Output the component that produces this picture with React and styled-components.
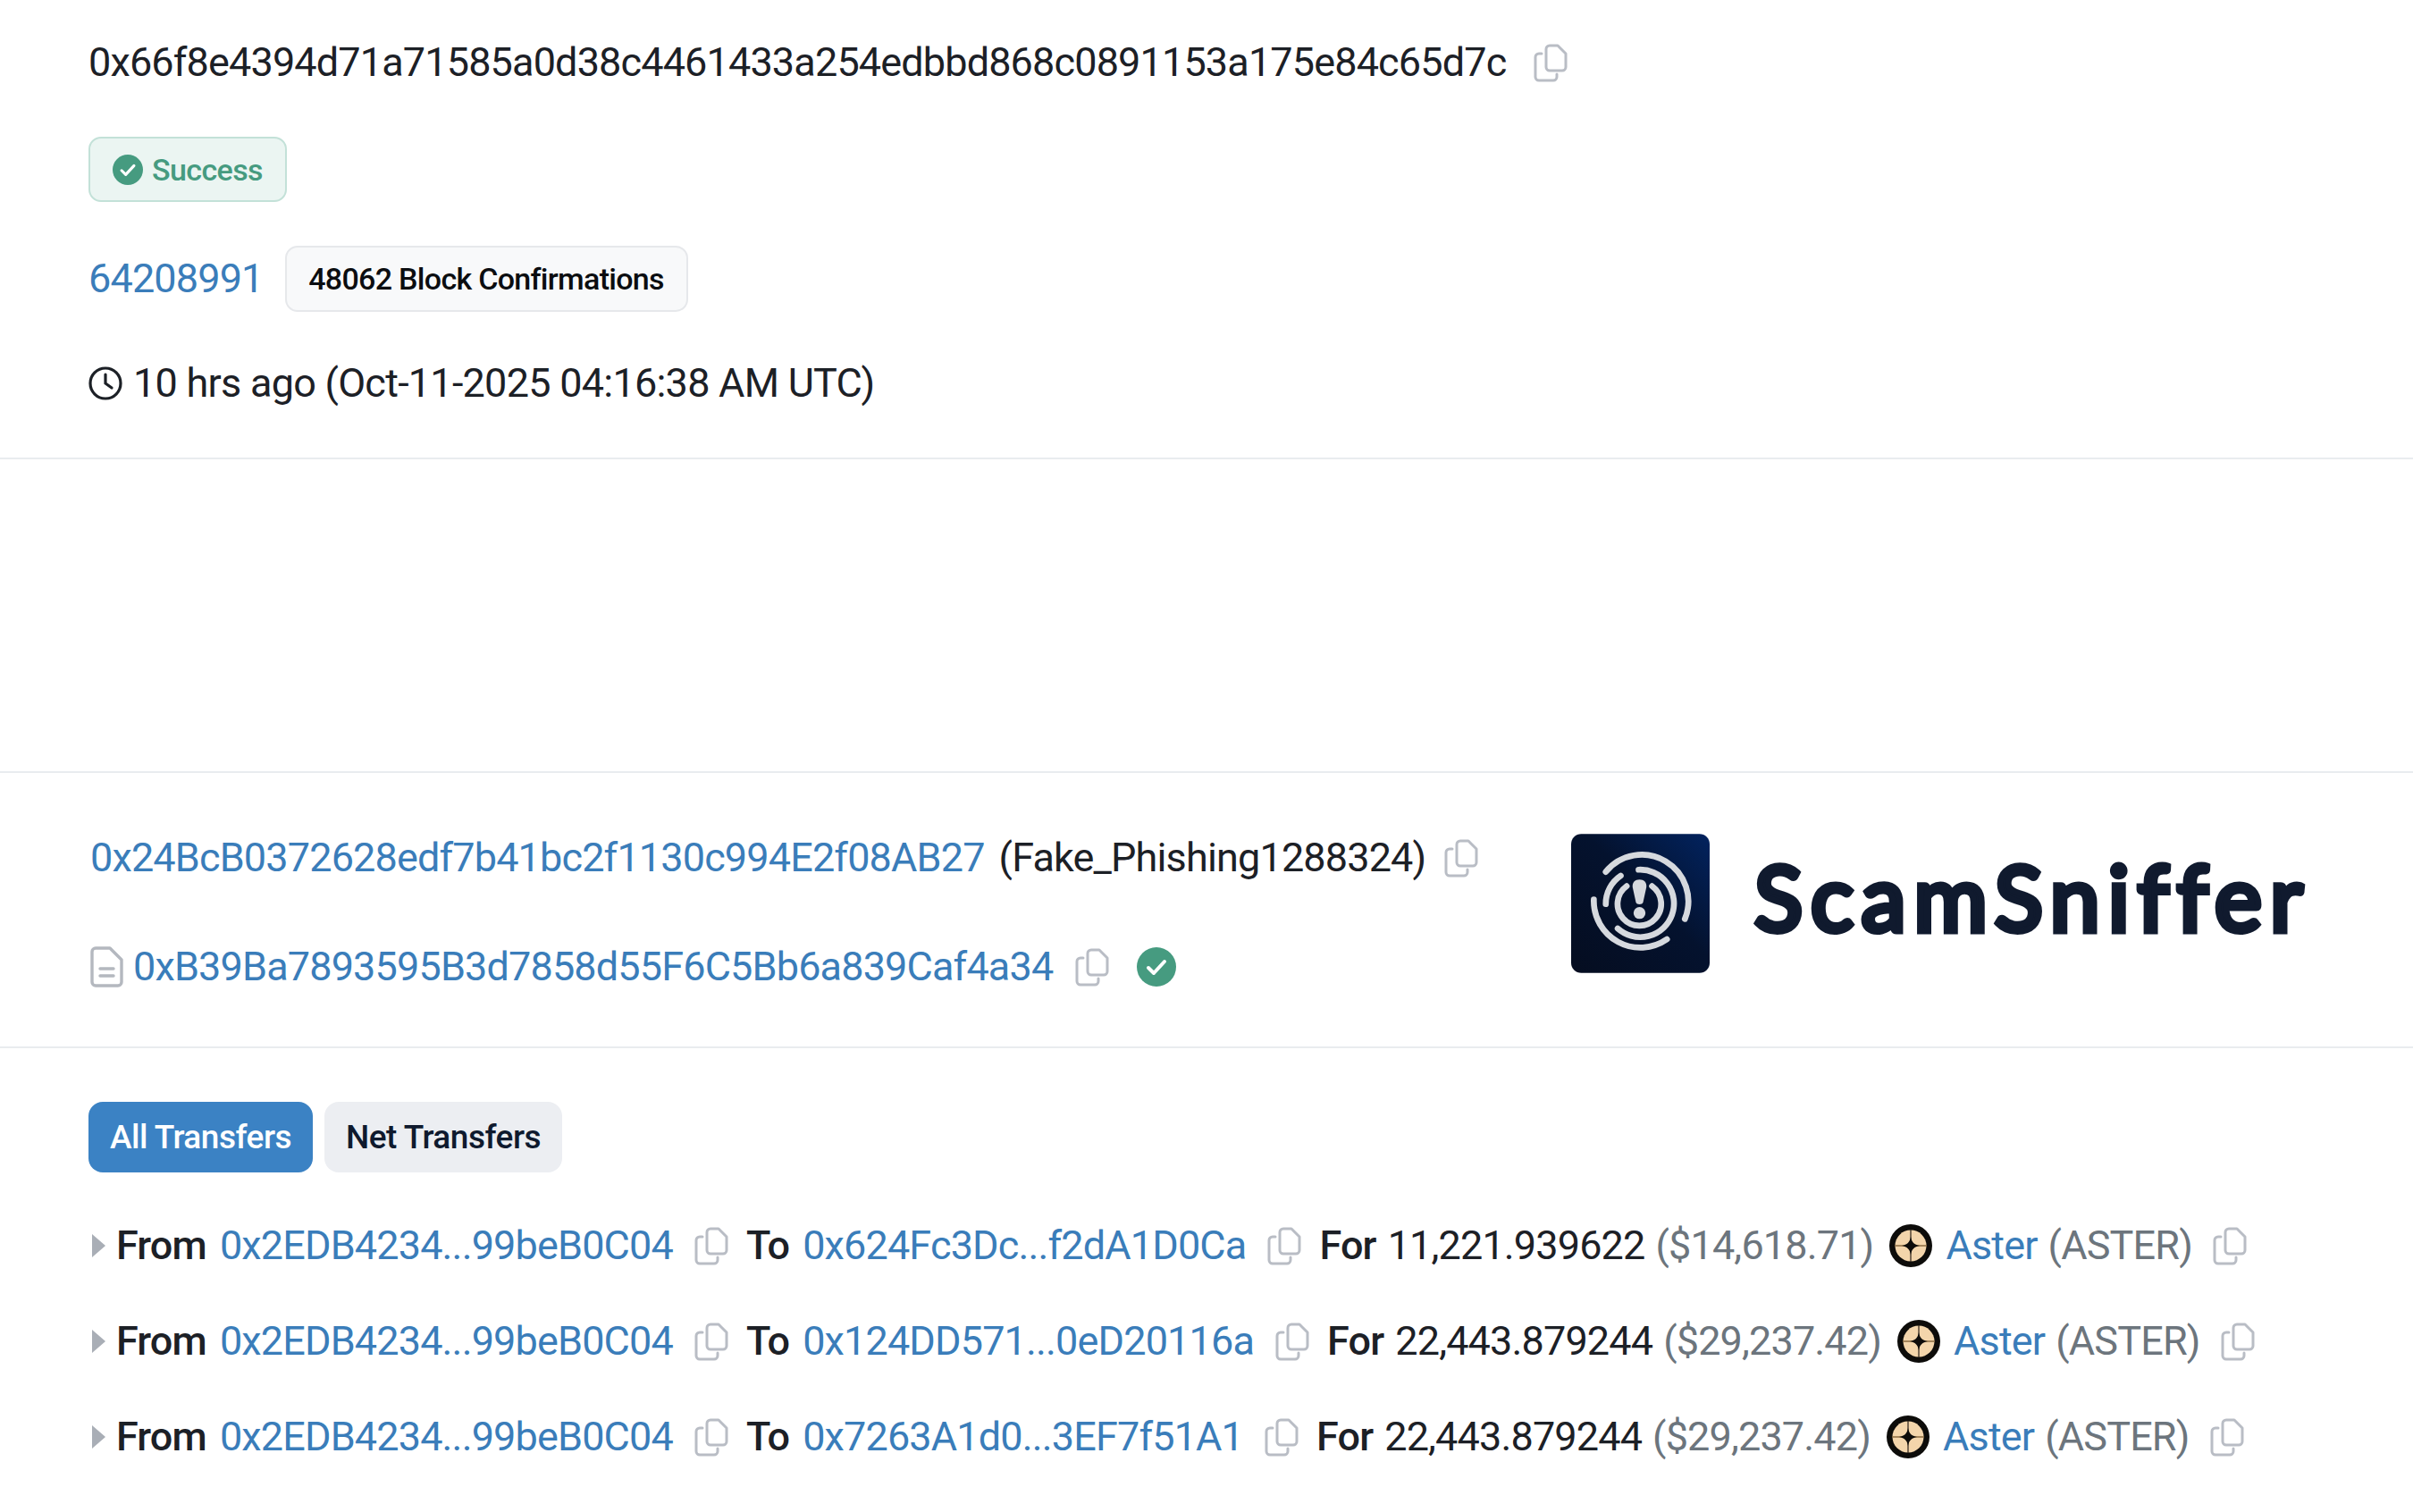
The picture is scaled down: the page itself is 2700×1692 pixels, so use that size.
import React from "react";
import styled, { createGlobalStyle } from "styled-components";

const GlobalStyle = createGlobalStyle`
  html, body {
    margin: 0;
    padding: 0;
    background: #fff;
  }
  body {
    font-family: Roboto, "Liberation Sans", sans-serif;
    color: #1c2026;
  }
`;

const Page = styled.div`
  width: 2700px;
  height: 1692px;
  overflow: hidden;
  font-size: 45px;
  letter-spacing: -0.85px;
  line-height: 60px;
`;

const Section = styled.section`
  border-bottom: 2px solid #e9ecef;
  padding: 40px 99px 53px;
  display: flex;
  flex-direction: column;
  align-items: flex-start;
`;

const Spacer = styled.div`
  height: 349px;
  border-bottom: 2px solid #e9ecef;
`;

const Row = styled.div`
  display: flex;
  align-items: center;
  height: 60px;
  white-space: nowrap;
  gap: ${(p) => p.$gap || 0}px;
  margin-top: ${(p) => p.$top || 0}px;
`;

const Link = styled.a`
  color: #3a7dba;
  text-decoration: none;
`;

const CopyWrap = styled.svg`
  width: 38px;
  height: 43px;
  flex: none;
  margin-left: ${(p) => p.$left || 0}px;
`;

const Copy = ({ left }) => (
  <CopyWrap $left={left} viewBox="0 0 38 43" fill="none" stroke="#b9bdc5" strokeWidth="3" strokeLinejoin="round">
    <path d="M14 6a4 4 0 0 1 4-4h9l9 9v15a4 4 0 0 1-4 4H18a4 4 0 0 1-4-4z" />
    <path d="M9 11H6a4 4 0 0 0-4 4v22a4 4 0 0 0 4 4h16a4 4 0 0 0 4-4v-3" strokeLinecap="round" />
  </CopyWrap>
);

const CheckDisc = styled.svg`
  width: ${(p) => p.$size}px;
  height: ${(p) => p.$size}px;
  flex: none;
`;

const Check = ({ size }) => (
  <CheckDisc $size={size} viewBox="0 0 44 44">
    <circle cx="22" cy="22" r="22" fill="#469b80" />
    <path d="M13 23l6 6 12-13" fill="none" stroke="#fff" strokeWidth="4" strokeLinecap="round" strokeLinejoin="round" />
  </CheckDisc>
);

const SuccessBadge = styled.div`
  display: flex;
  align-items: center;
  gap: 10px;
  box-sizing: border-box;
  height: 73px;
  width: 222px;
  margin-top: 53px;
  padding-left: 25px;
  border: 2px solid #c3e1d8;
  border-radius: 14px;
  background: #ebf5f2;
  color: #469b80;
  font-size: 34px;
  letter-spacing: -0.6px;
  font-weight: 500;
`;

const BlockBadge = styled.span`
  display: flex;
  align-items: center;
  justify-content: center;
  box-sizing: border-box;
  height: 74px;
  width: 451px;
  border: 2px solid #e6e8eb;
  border-radius: 14px;
  background: #f8f9fa;
  color: #0b0d10;
  font-size: 34px;
  letter-spacing: -0.7px;
  font-weight: 500;
`;

const ClockIcon = styled.svg`
  width: 38px;
  height: 38px;
  flex: none;
  margin-right: 12px;
`;

const TimeText = styled.span`
  letter-spacing: -0.75px;
`;

const PartyGrid = styled.section`
  display: flex;
  align-items: flex-start;
  height: 306px;
  border-bottom: 2px solid #e9ecef;
`;

const PartyColumn = styled.div`
  box-sizing: border-box;
  width: 1758px;
  padding: 65px 0 0 101px;
`;

const DocIcon = styled.svg`
  width: 37px;
  height: 46px;
  flex: none;
  margin-right: 11px;
`;

const Logo = styled.div`
  display: flex;
  align-items: center;
  gap: 50px;
  margin-top: 68px;
`;

const LogoMark = styled.svg`
  width: 155px;
  height: 156px;
  flex: none;
`;

const LogoText = styled.span`
  color: #101a2e;
  font-family: Lato, "Open Sans", sans-serif;
  font-weight: 400;
  font-size: 100px;
  line-height: 120px;
  letter-spacing: 9px;
  margin-bottom: 16px;
  -webkit-text-stroke: 7px #101a2e;
`;

const Transfers = styled.section`
  padding: 60px 0 0 99px;
`;

const Tabs = styled.div`
  display: flex;
  gap: 13px;
  margin-bottom: 52px;
`;

const Tab = styled.button`
  box-sizing: border-box;
  height: 79px;
  width: ${(p) => p.$width}px;
  border: 0;
  border-radius: 16px;
  padding: 0;
  background: ${(p) => (p.$active ? "#3b82c4" : "#eceef2")};
  color: ${(p) => (p.$active ? "#fff" : "#0f1a2e")};
  font-family: inherit;
  font-size: 37px;
  letter-spacing: -0.5px;
  font-weight: 500;
`;

const TransferList = styled.div`
  display: flex;
  flex-direction: column;
  gap: 47px;
`;

const Caret = styled.span`
  width: 0;
  height: 0;
  margin: 0 12px 0 4px;
  border-style: solid;
  border-width: 13px 0 13px 15px;
  border-color: transparent transparent transparent #a9aeb6;
`;

const Label = styled.span`
  font-weight: 500;
  margin-left: ${(p) => p.$left || 0}px;
`;

const Muted = styled.span`
  color: #6c757d;
`;

const Gap = styled.span`
  margin-left: ${(p) => p.$left}px;
`;

const TokenIcon = styled.svg`
  width: 48px;
  height: 48px;
  flex: none;
  margin: 0 15px 0 18px;
`;

const Aster = () => (
  <TokenIcon viewBox="0 0 48 48">
    <circle cx="24" cy="24" r="24" fill="#0d0c0a" />
    <circle cx="24" cy="24" r="17.500" fill="#f3d5ab" />
    <path d="M24 6v36" stroke="#2a2118" strokeWidth="1.2" />
    <path d="M6 24h36" stroke="#8a6a40" strokeWidth="1.6" />
    <path d="M24 14c1 6 4 9 10 10-6 1-9 4-10 10-1-6-4-9-10-10 6-1 9-4 10-10z" fill="#0d0c0a" />
  </TokenIcon>
);

const transfers = [
  { to: "0x624Fc3Dc...f2dA1D0Ca", amount: "11,221.939622", usd: "($14,618.71)" },
  { to: "0x124DD571...0eD20116a", amount: "22,443.879244", usd: "($29,237.42)" },
  { to: "0x7263A1d0...3EF7f51A1", amount: "22,443.879244", usd: "($29,237.42)" },
];

function App() {
  return (
    <Page>
      <GlobalStyle />
      <Section>
        <Row>
          0x66f8e4394d71a71585a0d38c4461433a254edbbd868c0891153a175e84c65d7c
          <Copy left={31} />
        </Row>
        <SuccessBadge>
          <Check size={34} />
          Success
        </SuccessBadge>
        <Row $top={56} $gap={24}>
          <Link>64208991</Link>
          <BlockBadge>48062 Block Confirmations</BlockBadge>
        </Row>
        <Row $top={57}>
          <ClockIcon viewBox="0 0 38 38" fill="none" stroke="#1c2026" strokeWidth="3.2" strokeLinecap="round">
            <circle cx="19" cy="19" r="17" />
            <path d="M19 9v10l7 5" />
          </ClockIcon>
          <TimeText>10 hrs ago (Oct-11-2025 04:16:38 AM UTC)</TimeText>
        </Row>
      </Section>
      <Spacer />
      <PartyGrid>
        <PartyColumn>
          <Row>
            <Link>0x24BcB0372628edf7b41bc2f1130c994E2f08AB27</Link>
            <Gap $left={16}>(Fake_Phishing1288324)</Gap>
            <Copy left={21} />
          </Row>
          <Row $top={62}>
            <DocIcon viewBox="0 0 37 46" fill="none" stroke="#b4b8bf" strokeWidth="3.4" strokeLinecap="round" strokeLinejoin="round">
              <path d="M6 2h16l13 13v25a4 4 0 0 1-4 4H6a4 4 0 0 1-4-4V6a4 4 0 0 1 4-4z" />
              <path d="M11 25h15M11 33h15" />
            </DocIcon>
            <Link>0xB39Ba7893595B3d7858d55F6C5Bb6a839Caf4a34</Link>
            <Copy left={25} />
            <Gap $left={31} />
            <Check size={44} />
          </Row>
        </PartyColumn>
        <Logo>
          <LogoMark viewBox="0 0 464 466">
            <defs>
              <linearGradient id="logoFill" x1="0" y1="1" x2="1" y2="0">
                <stop offset="0" stopColor="#050d20" />
                <stop offset="0.55" stopColor="#04122e" />
                <stop offset="1" stopColor="#02235f" />
              </linearGradient>
            </defs>
            <rect width="464" height="466" rx="34" fill="url(#logoFill)" />
            <g fill="none" stroke="#d6d9de" strokeWidth="20" strokeLinecap="round">
              <path d="M116 127A156 156 0 0 1 381 285" />
              <path d="M76 220A156 156 0 0 0 321 353" />
              <path d="M226 120A113 113 0 1 1 156 317" />
              <path d="M166 140A113 113 0 0 0 116 235" />
              <path d="M186 175A73 73 0 1 0 271 175" />
            </g>
            <path d="M229 153c-15 0-25 10-23 26l11 50c3 9 21 9 24 0l11-50c2-16-8-26-23-26z" fill="#d6d9de" />
            <circle cx="229" cy="265" r="20" fill="#d6d9de" />
          </LogoMark>
          <LogoText>ScamSniffer</LogoText>
        </Logo>
      </PartyGrid>
      <Transfers>
        <Tabs>
          <Tab $active $width={251}>All Transfers</Tab>
          <Tab $width={266}>Net Transfers</Tab>
        </Tabs>
        <TransferList>
          {transfers.map((t) => (
            <Row key={t.to}>
              <Caret />
              <Label>From</Label>
              <Gap $left={15}>
                <Link>0x2EDB4234...99beB0C04</Link>
              </Gap>
              <Copy left={24} />
              <Label $left={20}>To</Label>
              <Gap $left={15}>
                <Link>{t.to}</Link>
              </Gap>
              <Copy left={24} />
              <Label $left={20}>For</Label>
              <Gap $left={13}>{t.amount}</Gap>
              <Gap $left={12}>
                <Muted>{t.usd}</Muted>
              </Gap>
              <Aster />
              <Link>Aster</Link>
              <Gap $left={12}>
                <Muted>(ASTER)</Muted>
              </Gap>
              <Copy left={23} />
            </Row>
          ))}
        </TransferList>
      </Transfers>
    </Page>
  );
}

export default App;
